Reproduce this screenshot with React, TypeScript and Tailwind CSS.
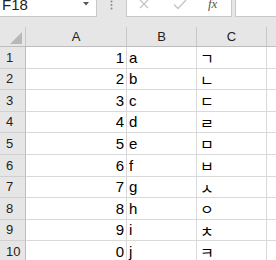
import React from "react";

const rows = [
  { n: "1", a: "1", b: "a", c: "ㄱ", h: "h-[22px]" },
  { n: "2", a: "2", b: "b", c: "ㄴ", h: "h-[21px]" },
  { n: "3", a: "3", b: "c", c: "ㄷ", h: "h-[22px]" },
  { n: "4", a: "4", b: "d", c: "ㄹ", h: "h-[21px]" },
  { n: "5", a: "5", b: "e", c: "ㅁ", h: "h-[22px]" },
  { n: "6", a: "6", b: "f", c: "ㅂ", h: "h-[22px]" },
  { n: "7", a: "7", b: "g", c: "ㅅ", h: "h-[21px]" },
  { n: "8", a: "8", b: "h", c: "ㅇ", h: "h-[22px]" },
  { n: "9", a: "9", b: "i", c: "ㅊ", h: "h-[21px]" },
  { n: "10", a: "0", b: "j", c: "ㅋ", h: "h-[22px]" },
];

export default function App() {
  return (
    <div className="w-[276px] h-[260px] overflow-hidden bg-[#e6e6e6] flex flex-col font-['Liberation_Sans',Arial,sans-serif] text-black">
      {/* top bar */}
      <div className="flex h-[17px] shrink-0">
        <div className="w-[97px] bg-white border-r border-b border-[#c8c8c8] flex items-start">
          <span className="pl-[2px] text-[15px] leading-[15px] -mt-[3px] text-[#222]">F18</span>
          <svg className="ml-auto mr-[7px] mt-[2px]" width="6" height="4" viewBox="0 0 6 4">
            <polygon points="0,0 6,0 3,3.5" fill="#555" />
          </svg>
        </div>
        <div className="w-[29px] flex justify-center items-start">
          <svg width="3" height="10" viewBox="0 0 3 10">
            <circle cx="1.5" cy="1.5" r="1" fill="#8a8a8a" />
            <circle cx="1.5" cy="5" r="1" fill="#8a8a8a" />
            <circle cx="1.5" cy="8.5" r="1" fill="#8a8a8a" />
          </svg>
        </div>
        <div className="w-[106px] bg-white border-l border-r border-b border-[#c8c8c8] flex items-start">
          <svg className="ml-[12px]" width="10" height="9" viewBox="0 0 10 9">
            <path d="M1 0 L9 8 M9 0 L1 8" stroke="#c4c4c4" strokeWidth="1.2" fill="none" />
          </svg>
          <svg className="ml-[24px]" width="14" height="10" viewBox="0 0 14 10">
            <path d="M1 4.5 L5 8.5 L13 0" stroke="#c4c4c4" strokeWidth="1.3" fill="none" />
          </svg>
          <span className="ml-[21px] -mt-[3px] text-[13px] leading-[13px] italic font-['Liberation_Serif',serif] text-[#555]">
            fx
          </span>
        </div>
        <div className="w-[3px]" />
        <div className="flex-1 bg-white border-l border-b border-[#c8c8c8]" />
      </div>
      <div className="h-[10px] shrink-0" />
      {/* header row */}
      <div className="flex h-[20px] shrink-0 border-b border-[#bdbdbd] text-[13px] text-[#222]">
        <div className="w-[26px] border-r border-[#c8c8c8] flex items-end justify-end pr-[2px] pb-[1px]">
          <svg width="13" height="13" viewBox="0 0 13 13">
            <polygon points="12,0 12,12 0,12" fill="#b8b8b8" />
          </svg>
        </div>
        <div className="w-[101px] border-r border-[#c8c8c8] flex items-center justify-center">A</div>
        <div className="w-[70px] border-r border-[#c8c8c8] flex items-center justify-center">B</div>
        <div className="w-[70px] border-r border-[#c8c8c8] flex items-center justify-center">C</div>
        <div className="flex-1" />
      </div>
      {/* rows */}
      {rows.map((r) => (
        <div key={r.n} className={`flex shrink-0 ${r.h}`}>
          <div className="w-[26px] border-r border-b border-r-[#bdbdbd] border-b-[#d0d0d0] flex items-center pl-[6px] text-[13px] text-[#222]">
            {r.n}
          </div>
          <div className="w-[101px] bg-white border-r border-b border-[#d9d9d9] flex items-end justify-end pr-[2px] pb-[3px] text-[15px] leading-[15px]">
            {r.a}
          </div>
          <div className="w-[70px] bg-white border-r border-b border-[#d9d9d9] flex items-end pl-[2px] pb-[3px] text-[15px] leading-[15px]">
            {r.b}
          </div>
          <div className="w-[70px] bg-white border-r border-b border-[#d9d9d9] flex items-center pl-[3px] text-[15px] leading-[15px] font-['Noto_Sans_CJK_KR',sans-serif]">
            {r.c}
          </div>
          <div className="flex-1 bg-white border-b border-[#d9d9d9]" />
        </div>
      ))}
    </div>
  );
}
